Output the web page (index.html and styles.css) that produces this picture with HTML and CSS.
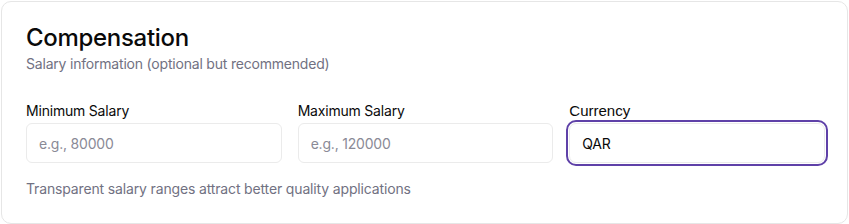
FILE: index.html
```html
<!DOCTYPE html>
<html lang="en">
<head>
    <meta charset="UTF-8">
    <meta name="viewport" content="width=device-width, initial-scale=1.0">
    <title>Compensation</title>
    <link rel="stylesheet" href="styles.css">
</head>
<body>
    <div class="card">
        <h2 class="card-title">Compensation</h2>
        <p class="card-subtitle">Salary information (optional but recommended)</p>

        <div class="fields">
            <div class="field">
                <label for="minSalary" class="field-label">Minimum Salary</label>
                <input type="number" id="minSalary" class="field-input" placeholder="e.g., 80000">
            </div>
            <div class="field">
                <label for="maxSalary" class="field-label">Maximum Salary</label>
                <input type="number" id="maxSalary" class="field-input" placeholder="e.g., 120000">
            </div>
            <div class="field">
                <label for="currency" class="field-label field-label-plain">Currency</label>
                <input type="text" id="currency" class="field-input field-input-focus" value="QAR">
            </div>
        </div>

        <p class="hint">Transparent salary ranges attract better quality applications</p>
    </div>
</body>
</html>
```

FILE: styles.css
```css
body {
    font-family: Inter, "Noto Sans", sans-serif;
    margin: 0;
    background-color: #ffffff;
    color: #0a0a0a;
}
.card {
    margin: 1px;
    padding: 20px 22px 24px 24px;
    border: 1px solid #e6e6e6;
    border-radius: 10px;
    background: white;
}
.card-title {
    margin: 0;
    font-size: 24px;
    line-height: 32px;
    font-weight: 500;
    letter-spacing: -0.3px;
}
.card-subtitle {
    margin: 0;
    font-size: 14px;
    line-height: 20px;
    color: #717182;
    letter-spacing: -0.2px;
}
.fields {
    display: grid;
    grid-template-columns: repeat(3, 1fr);
    gap: 16px;
    margin-top: 27px;
}
.field {
    display: flex;
    flex-direction: column;
    gap: 2px;
}
.field-label {
    font-size: 14px;
    line-height: 20px;
    font-weight: 400;
    letter-spacing: -0.2px;
}
.field-label-plain {
    font-family: "Liberation Sans", Arial, sans-serif;
    font-size: 15px;
    letter-spacing: 0;
}
.field-input {
    box-sizing: border-box;
    height: 40px;
    padding: 0 12px;
    font-family: inherit;
    font-size: 14px;
    letter-spacing: -0.2px;
    color: #0a0a0a;
    border: 1px solid #ebebeb;
    border-radius: 6px;
    background: white;
    outline: none;
}
.field-input::placeholder {
    color: #8a8a96;
}
.field-input-focus {
    outline: 2px solid #5f41a8;
    outline-offset: 1px;
    border-radius: 7px;
}
.hint {
    margin: 16px 0 0 0;
    font-size: 14px;
    line-height: 20px;
    color: #717182;
    letter-spacing: -0.15px;
}
```
